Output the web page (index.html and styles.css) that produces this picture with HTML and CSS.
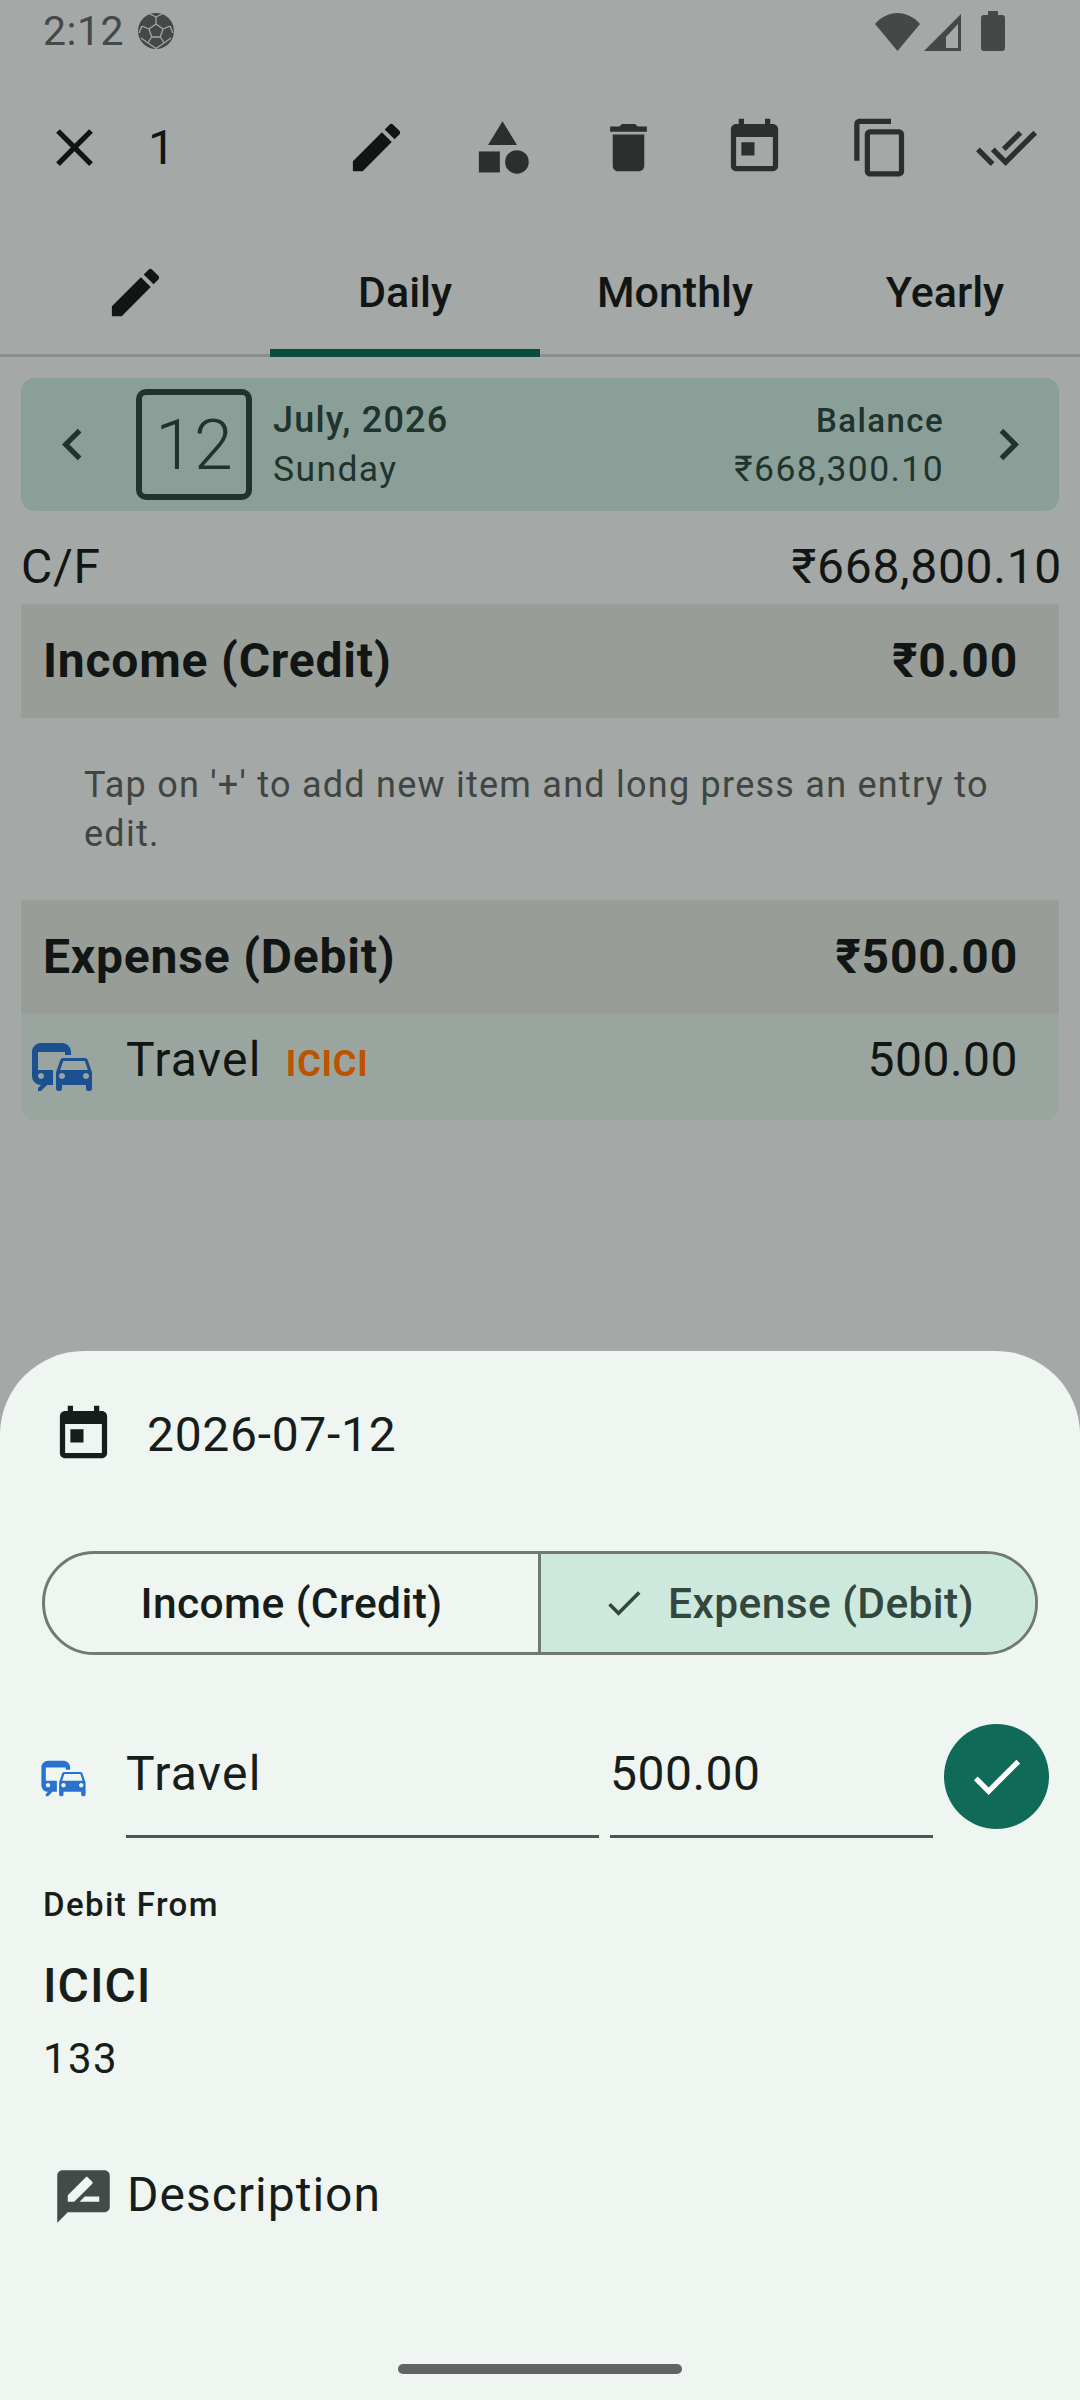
FILE: index.html
```html
<!DOCTYPE html>
<html lang="en">
<head>
    <meta charset="UTF-8">
    <meta name="viewport" content="width=device-width, initial-scale=1.0">
    <title>Daily</title>
    <link rel="stylesheet" href="styles.css">
</head>
<body>
    <div class="page">
        <div class="status-bar">
            <span class="status-time">2:12</span>
            <svg class="status-ball" viewBox="0 0 36 36">
                <circle cx="18" cy="18" r="18" fill="#444846"/>
                <path d="M18 11l7 5-2.7 8h-8.6L11 16zM18 11V4M25 16l7-3M22.300 24l4 6M13.700 24l-4 6M11 16l-7-3M18 4l-7-3.500M18 4l7-3.500M32 13l3 7M4 13l-3 7M26 30l7-5M10 30l-7-5M10 30l8 5.500M26 30l-8 5.500" fill="none" stroke="#a4a8a6" stroke-width="1.300"/>
            </svg>
            <div class="status-right">
                <svg class="status-wifi" viewBox="0 0 45 38"><path d="M0 11C6 4 14 0 22.500 0S39 4 45 11L22.500 38z"/></svg>
                <svg class="status-cell" viewBox="0 0 37 37"><path fill-rule="evenodd" d="M37 0v37H0zM34 10L22 23v11h12z"/></svg>
                <svg class="status-battery" viewBox="0 0 24 40"><path d="M7 0h10v4h4c2 0 3 1 3 3v30c0 2-1 3-3 3H3c-2 0-3-1-3-3V7c0-2 1-3 3-3h4z"/></svg>
            </div>
        </div>

        <div class="toolbar">
            <div class="tool">
                <svg viewBox="0 0 24 24"><path d="M19 6.410 17.590 5 12 10.590 6.410 5 5 6.410 10.590 12 5 17.590 6.410 19 12 13.410 17.590 19 19 17.590 13.410 12z"/></svg>
            </div>
            <span class="toolbar-count">1</span>
            <div class="toolbar-actions">
                <div class="tool">
                    <svg viewBox="0 0 24 24"><path d="M3 17.250V21h3.750L17.810 9.940l-3.750-3.750L3 17.250zM20.710 7.040c.39-.39.39-1.020 0-1.410l-2.340-2.340c-.39-.39-1.020-.39-1.410 0l-1.830 1.830 3.750 3.750 1.830-1.830z"/></svg>
                </div>
                <div class="tool">
                    <svg viewBox="0 0 24 24"><path d="M12 2l-5.500 9h11z"/><circle cx="17.500" cy="17.500" r="4.500"/><path d="M3 13.500h8v8H3z"/></svg>
                </div>
                <div class="tool">
                    <svg viewBox="0 0 24 24"><path d="M6 19c0 1.100.9 2 2 2h8c1.100 0 2-.9 2-2V7H6v12zM19 4h-3.500l-1-1h-5l-1 1H5v2h14V4z"/></svg>
                </div>
                <div class="tool">
                    <svg viewBox="0 0 24 24"><path d="M19 3h-1V1h-2v2H8V1H6v2H5c-1.110 0-1.990.9-1.990 2L3 19c0 1.100.89 2 2 2h14c1.100 0 2-.9 2-2V5c0-1.100-.9-2-2-2zm0 16H5V8h14v11zM7 10h5v5H7z"/></svg>
                </div>
                <div class="tool">
                    <svg viewBox="0 0 24 24"><path d="M16 1H4c-1.100 0-2 .9-2 2v14h2V3h12V1zm3 4H8c-1.100 0-2 .9-2 2v14c0 1.100.9 2 2 2h11c1.100 0 2-.9 2-2V7c0-1.100-.9-2-2-2zm0 16H8V7h11v14z"/></svg>
                </div>
                <div class="tool">
                    <svg viewBox="0 0 24 24"><path d="M18 7l-1.410-1.410-6.340 6.340 1.410 1.410L18 7zm4.240-1.410L11.660 16.170 7.480 12l-1.410 1.410L11.660 19l12-12-1.420-1.410zM.41 13.410L6 19l1.410-1.410L1.830 12 .41 13.410z"/></svg>
                </div>
            </div>
        </div>

        <div class="tabs">
            <div class="tab">
                <svg class="tab-icon" viewBox="0 0 24 24"><path d="M3 17.250V21h3.750L17.810 9.940l-3.750-3.750L3 17.250zM20.710 7.040c.39-.39.39-1.020 0-1.410l-2.340-2.340c-.39-.39-1.020-.39-1.410 0l-1.830 1.830 3.750 3.750 1.830-1.830z"/></svg>
            </div>
            <div class="tab active">Daily</div>
            <div class="tab">Monthly</div>
            <div class="tab">Yearly</div>
        </div>

        <div class="date-card">
            <svg class="chevron" viewBox="0 0 24 24"><path d="M15.410 7.410 14 6l-6 6 6 6 1.410-1.410L10.830 12z"/></svg>
            <div class="day-box">12</div>
            <div class="date-info">
                <div class="date-top">July, 2026</div>
                <div class="date-bottom">Sunday</div>
            </div>
            <div class="balance">
                <div class="date-top balance-label">Balance</div>
                <div class="date-bottom">₹668,300.10</div>
            </div>
            <svg class="chevron chevron-right" viewBox="0 0 24 24"><path d="M10 6 8.590 7.410 13.170 12l-4.580 4.590L10 18l6-6z"/></svg>
        </div>

        <div class="carry">
            <span>C/F</span>
            <span>₹668,800.10</span>
        </div>

        <div class="section-head">
            <span>Income (Credit)</span>
            <span>₹0.00</span>
        </div>
        <p class="hint">Tap on '+' to add new item and long press an entry to edit.</p>
        <div class="section-head">
            <span>Expense (Debit)</span>
            <span>₹500.00</span>
        </div>
        <div class="entry">
            <svg class="entry-icon" viewBox="0 0 24 24"><path d="M12 4H5C3.340 4 2 5.340 2 7v8c0 1.660 1.340 3 3 3l-1 1v1h1l2-2h2v-5H4V6.990L13 7v1h2V7c0-1.660-1.340-3-3-3zM5 14c.55 0 1 .45 1 1s-.45 1-1 1-1-.45-1-1 .45-1 1-1zm15.570-4.340c-.14-.4-.52-.66-.97-.66h-7.190c-.46 0-.83.26-.98.66L10 13.770l.01 5.510c0 .38.31.72.69.72h.62c.38 0 .68-.38.68-.76V18h8v1.240c0 .38.31.76.69.76h.61c.38 0 .69-.34.69-.72l.01-1.370v-4.140l-1.430-4.110zm-8.160.34h7.190l1.030 3h-9.250l1.030-3zM12 16c-.55 0-1-.45-1-1s.45-1 1-1 1 .45 1 1-.45 1-1 1zm8 0c-.55 0-1-.45-1-1s.45-1 1-1 1 .45 1 1-.45 1-1 1z"/></svg>
            <span class="entry-name">Travel</span>
            <span class="entry-bank">ICICI</span>
            <span class="entry-amount">500.00</span>
        </div>

        <div class="sheet">
            <div class="date-row">
                <svg class="sheet-icon" viewBox="0 0 24 24"><path d="M19 3h-1V1h-2v2H8V1H6v2H5c-1.110 0-1.990.9-1.990 2L3 19c0 1.100.89 2 2 2h14c1.100 0 2-.9 2-2V5c0-1.100-.9-2-2-2zm0 16H5V8h14v11zM7 10h5v5H7z"/></svg>
                <span class="sheet-date">2026-07-12</span>
            </div>

            <div class="segments">
                <div class="segment">Income (Credit)</div>
                <div class="segment selected">
                    <svg class="segment-check" viewBox="0 0 24 24"><path d="M9 16.170 4.830 12l-1.420 1.410L9 19 21 7l-1.410-1.410z"/></svg>
                    Expense (Debit)
                </div>
            </div>

            <div class="form-row">
                <svg class="form-icon" viewBox="0 0 24 24"><path d="M12 4H5C3.340 4 2 5.340 2 7v8c0 1.660 1.340 3 3 3l-1 1v1h1l2-2h2v-5H4V6.990L13 7v1h2V7c0-1.660-1.340-3-3-3zM5 14c.55 0 1 .45 1 1s-.45 1-1 1-1-.45-1-1 .45-1 1-1zm15.570-4.340c-.14-.4-.52-.66-.97-.66h-7.190c-.46 0-.83.26-.98.66L10 13.770l.01 5.510c0 .38.31.72.69.72h.62c.38 0 .68-.38.68-.76V18h8v1.240c0 .38.31.76.69.76h.61c.38 0 .69-.34.69-.72l.01-1.370v-4.140l-1.430-4.110zm-8.160.34h7.190l1.030 3h-9.250l1.030-3zM12 16c-.55 0-1-.45-1-1s.45-1 1-1 1 .45 1 1-.45 1-1 1zm8 0c-.55 0-1-.45-1-1s.45-1 1-1 1 .45 1 1-.45 1-1 1z"/></svg>
                <div class="field field-name">Travel</div>
                <div class="field field-amount">500.00</div>
                <div class="save-btn">
                    <svg viewBox="0 0 24 24"><path d="M9 16.170 4.830 12l-1.420 1.410L9 19 21 7l-1.410-1.410z"/></svg>
                </div>
            </div>

            <div class="debit-label">Debit From</div>
            <div class="debit-bank">ICICI</div>
            <div class="debit-number">133</div>

            <div class="desc-row">
                <svg class="sheet-icon desc-icon" viewBox="0 0 24 24"><path d="M20 2H4c-1.100 0-1.990.9-1.990 2L2 22l4-4h14c1.100 0 2-.9 2-2V4c0-1.100-.9-2-2-2zM6 14v-2.470l6.880-6.880c.2-.2.51-.2.71 0l1.770 1.770c.2.2.2.51 0 .71L8.470 14H6zm12 0h-7.500l2-2H18v2z"/></svg>
                <span class="desc-text">Description</span>
            </div>

            <div class="home-pill"></div>
        </div>
    </div>
</body>
</html>
```

FILE: styles.css
```css
* {
    box-sizing: border-box;
}

body {
    margin: 0;
    font-family: Roboto, 'Noto Sans', sans-serif;
    background-color: #a4a8a6;
}

svg {
    display: block;
    fill: currentColor;
    flex-shrink: 0;
}

.page {
    position: relative;
    width: 1080px;
    height: 2400px;
    overflow: hidden;
    background-color: #a4a8a6;
    color: #111614;
}

/* status bar */
.status-bar {
    display: flex;
    align-items: center;
    height: 61px;
    padding: 0 75px 0 43px;
    color: #444846;
}

.status-time {
    font-size: 41px;
    letter-spacing: 0.5px;
}

.status-ball {
    width: 36px;
    height: 36px;
    margin-left: 14px;
}

.status-right {
    display: flex;
    align-items: flex-end;
    margin-left: auto;
}

.status-wifi {
    width: 45px;
    height: 38px;
}

.status-cell {
    width: 37px;
    height: 37px;
    margin-left: 4px;
}

.status-battery {
    width: 24px;
    height: 40px;
    margin-left: 20px;
}

/* action toolbar */
.toolbar {
    display: flex;
    align-items: center;
    height: 172px;
    padding: 0 11px;
    color: #2b302e;
}

.tool {
    display: flex;
    align-items: center;
    justify-content: center;
    width: 126px;
    height: 126px;
}

.tool svg {
    width: 63px;
    height: 63px;
}

.toolbar .tool:first-child {
    color: #111614;
}

.toolbar-count {
    margin-left: 11px;
    font-size: 48px;
    color: #111614;
}

.toolbar-actions {
    display: flex;
    margin-left: auto;
}

/* tabs */
.tabs {
    display: flex;
    height: 124px;
    border-bottom: 3px solid #8b908e;
}

.tab {
    display: flex;
    align-items: center;
    justify-content: center;
    width: 270px;
    height: 124px;
    padding-bottom: 6px;
    font-size: 43px;
    font-weight: 500;
}

.tab.active {
    border-bottom: 8px solid #0a4c3f;
    padding: 2px 0 0;
}

.tab-icon {
    width: 63px;
    height: 63px;
}

/* date card */
.date-card {
    display: flex;
    align-items: center;
    height: 133px;
    margin: 21px 21px 0;
    border-radius: 14px;
    background-color: #8a9f98;
    color: #20332c;
}

.chevron {
    width: 63px;
    height: 63px;
    margin: 0 19px 0 20px;
}

.chevron-right {
    margin: 0 19px;
}

.day-box {
    display: flex;
    align-items: center;
    justify-content: center;
    width: 116px;
    height: 111px;
    margin-left: 13px;
    border: 6px solid #20332c;
    border-radius: 10px;
    font-size: 70px;
    font-weight: 300;
}

.date-info {
    margin-left: 21px;
    flex: 1;
}

.balance {
    margin-right: 14px;
    text-align: right;
}

.date-top {
    height: 49px;
    line-height: 49px;
    font-size: 36px;
    font-weight: 500;
    letter-spacing: 1.2px;
}

.balance-label {
    font-size: 33px;
    letter-spacing: 1.4px;
}

.date-bottom {
    height: 49px;
    line-height: 49px;
    font-size: 35.5px;
    letter-spacing: 1.4px;
}

/* list */
.carry {
    display: flex;
    justify-content: space-between;
    height: 93px;
    padding: 0 18px 0 21px;
    line-height: 112px;
    font-size: 48px;
    letter-spacing: 0.7px;
}

.section-head {
    display: flex;
    align-items: center;
    justify-content: space-between;
    height: 114px;
    margin: 0 21px;
    padding: 0 41px 2px 22px;
    background-color: #989d98;
    font-size: 48px;
    font-weight: 700;
    letter-spacing: 0.8px;
}

.hint {
    height: 182px;
    margin: 0;
    padding: 43px 84px 0;
    line-height: 49px;
    font-size: 36px;
    letter-spacing: 1.25px;
    color: #3f4543;
}

.entry {
    display: flex;
    align-items: flex-start;
    height: 106px;
    margin: 0 21px;
    padding: 17px 41px 0 5px;
    border-radius: 0 0 14px 14px;
    background-color: #9ba59f;
}

.entry-icon {
    width: 72px;
    height: 72px;
    color: #1b5191;
}

.entry-name {
    margin-left: 28px;
    line-height: 58px;
    font-size: 48px;
    letter-spacing: 1.3px;
}

.entry-bank {
    margin-left: 24px;
    line-height: 66px;
    font-size: 36px;
    font-weight: 700;
    letter-spacing: 0.8px;
    color: #bd5300;
}

.entry-amount {
    margin-left: auto;
    line-height: 58px;
    font-size: 48px;
    letter-spacing: 0.5px;
}

/* bottom sheet */
.sheet {
    position: absolute;
    left: 0;
    right: 0;
    bottom: 0;
    height: 1049px;
    padding-top: 50px;
    border-radius: 84px 84px 0 0;
    background-color: #eff5f1;
    color: #171d1a;
}

.date-row {
    display: flex;
    align-items: center;
    height: 66px;
    padding-left: 52px;
}

.sheet-icon {
    width: 63px;
    height: 63px;
}

.sheet-date {
    margin-left: 32px;
    font-size: 48px;
    letter-spacing: 0.7px;
}

.segments {
    display: flex;
    height: 104px;
    margin: 84px 42px 0;
    border: 3px solid #6f7a74;
    border-radius: 52px;
    overflow: hidden;
}

.segment {
    display: flex;
    align-items: center;
    justify-content: center;
    width: 493px;
    font-size: 42.5px;
    font-weight: 500;
    letter-spacing: 0.4px;
}

.segment.selected {
    flex: 1;
    border-left: 3px solid #6f7a74;
    background-color: #cde8dc;
    color: #33473e;
}

.segment-check {
    width: 44px;
    height: 44px;
    margin-right: 22px;
}

.form-row {
    display: flex;
    align-items: flex-start;
    height: 114px;
    margin-top: 69px;
    padding-left: 37px;
}

.form-icon {
    width: 53px;
    height: 53px;
    margin-top: 28px;
    color: #2a72cf;
}

.field {
    height: 114px;
    padding-top: 22px;
    border-bottom: 3px solid #4c5652;
    line-height: 56px;
    font-size: 48px;
    letter-spacing: 1.3px;
}

.field-name {
    width: 473px;
    margin-left: 36px;
}

.field-amount {
    width: 323px;
    margin-left: 11px;
    letter-spacing: 0.5px;
}

.save-btn {
    display: flex;
    align-items: center;
    justify-content: center;
    width: 105px;
    height: 105px;
    margin-left: 11px;
    border-radius: 50%;
    background-color: #0f6b58;
    color: #ffffff;
}

.save-btn svg {
    width: 63px;
    height: 63px;
}

.debit-label {
    height: 40px;
    margin: 47px 0 0 43px;
    line-height: 40px;
    font-size: 33px;
    font-weight: 500;
    letter-spacing: 1.4px;
}

.debit-bank {
    height: 60px;
    margin: 31px 0 0 43px;
    line-height: 60px;
    font-size: 48px;
    font-weight: 500;
    letter-spacing: 1px;
}

.debit-number {
    height: 50px;
    margin: 18px 0 0 43px;
    line-height: 50px;
    font-size: 42px;
    letter-spacing: 1.4px;
}

.desc-row {
    display: flex;
    align-items: center;
    height: 66px;
    margin-top: 79px;
    padding-left: 52px;
}

.desc-icon {
    color: #444a47;
}

.desc-text {
    margin-left: 12px;
    padding-bottom: 3px;
    font-size: 48px;
    letter-spacing: 1px;
}

.home-pill {
    position: absolute;
    left: 398px;
    bottom: 26px;
    width: 284px;
    height: 10px;
    border-radius: 5px;
    background-color: #616462;
}
```
